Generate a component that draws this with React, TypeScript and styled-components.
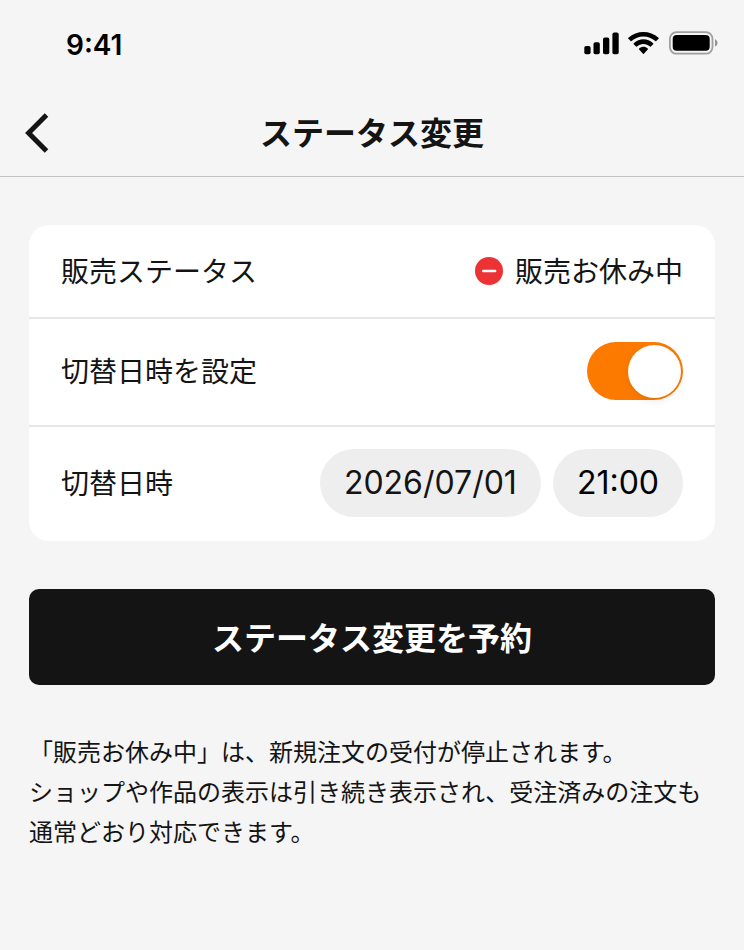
import React, { useState } from "react";
import styled, { createGlobalStyle } from "styled-components";

const GlobalStyle = createGlobalStyle`
  *, *::before, *::after { box-sizing: border-box; }
  body {
    margin: 0;
    background: #f5f5f5;
    color: #141414;
    font-family: "Noto Sans CJK JP", sans-serif;
  }
`;

const StatusBar = styled.div`
  display: flex;
  align-items: flex-start;
  justify-content: space-between;
  height: 88px;
  padding: 28px 26px 0 66px;
  color: #000;
`;

const Clock = styled.time`
  font: 600 28px/34px Inter, sans-serif;
`;

const Indicators = styled.div`
  display: flex;
  align-items: center;
  gap: 9px;
  padding-top: 3px;
`;

const Header = styled.header`
  display: grid;
  grid-template-columns: 48px 1fr 48px;
  align-items: center;
  height: 89px;
  padding: 0 13px;
  border-bottom: 1px solid #c4c4c4;
`;

const BackButton = styled.button`
  display: flex;
  align-items: center;
  justify-content: center;
  width: 48px;
  height: 48px;
  padding: 0;
  border: 0;
  background: none;
  color: inherit;
`;

const Title = styled.h1`
  margin: 0;
  padding-bottom: 2px;
  font-size: 32px;
  line-height: 48px;
  font-weight: 700;
  text-align: center;
`;

const Main = styled.main`
  display: flex;
  flex-direction: column;
  gap: 48px;
  padding: 48px 29px;
`;

const Card = styled.section`
  border-radius: 20px;
  background: #fff;
`;

const Row = styled.div<{ $compact?: boolean }>`
  display: flex;
  align-items: center;
  justify-content: space-between;
  padding: ${(p) => (p.$compact ? "25px 32px" : "22px 32px 24px")};
  font-size: 28px;
  line-height: 40px;

  & + & {
    border-top: 2px solid #e6e6e6;
  }
`;

const RowText = styled.span`
  padding-bottom: 2px;
`;

const Status = styled.span`
  display: flex;
  align-items: center;
  gap: 12px;
`;

const Switch = styled.input`
  appearance: none;
  display: flex;
  align-items: center;
  width: 96px;
  height: 58px;
  margin: 1px 0;
  padding: 2px;
  border-radius: 29px;
  background: #ccc;

  &::before {
    content: "";
    width: 53px;
    height: 53px;
    border-radius: 50%;
    background: #fff;
    box-shadow: 0 3px 8px rgba(0, 0, 0, 0.08);
  }

  &:checked {
    justify-content: flex-end;
    background: #fc7a00;
  }
`;

const Pickers = styled.div`
  display: flex;
  gap: 12px;
`;

const Picker = styled.button<{ $strong?: boolean }>`
  height: 68px;
  padding: 0 24px;
  border: 0;
  border-radius: 34px;
  background: #eee;
  color: ${(p) => (p.$strong ? "#000" : "#141414")};
  font: 400 32px/44px Inter, sans-serif;
`;

const SubmitButton = styled.button`
  height: 96px;
  padding: 0 24px 3px;
  border: 0;
  border-radius: 10px;
  background: #141414;
  color: #fff;
  font: 700 32px/48px "Noto Sans CJK JP", sans-serif;
`;

const Note = styled.p`
  margin: -2px 0 0;
  font-size: 24px;
  line-height: 40px;
`;

const SignalIcon = () => (
  <svg width="35" height="23" viewBox="0 0 35 23" fill="currentColor" aria-hidden="true">
    <rect x="0.3" y="14" width="6.3" height="8.2" rx="1.8" />
    <rect x="9.5" y="10.3" width="6.3" height="11.9" rx="1.8" />
    <rect x="19" y="5.6" width="6.3" height="16.6" rx="1.8" />
    <rect x="28.4" y="0.6" width="6.3" height="21.6" rx="1.8" />
  </svg>
);

const WifiIcon = () => (
  <svg width="31" height="22" viewBox="0 0 17.2 12.33" fill="currentColor" aria-hidden="true">
    <path d="M8.5713 2.46628C11.0584 2.46639 13.4504 3.38847 15.2529 5.04195C15.3887 5.16963 15.6056 5.16802 15.7393 5.03834L17.0368 3.77487C17.1045 3.70911 17.1422 3.62004 17.1417 3.52735C17.1411 3.43467 17.1023 3.34603 17.0338 3.28104C12.3028 -1.09368 4.83907 -1.09368 0.108056 3.28104C0.0395 3.34598 0.0006 3.43459 0 3.52728C-0.0005 3.61997 0.03714 3.70906 0.10488 3.77487L1.40277 5.03834C1.5363 5.16822 1.75334 5.16983 1.88906 5.04195C3.69187 3.38836 6.08413 2.46628 8.5713 2.46628ZM8.56795 6.68656C9.92527 6.68647 11.2341 7.19821 12.2403 8.12234C12.3763 8.25347 12.5907 8.25062 12.7234 8.11595L14.0106 6.79663C14.0784 6.72742 14.116 6.63355 14.115 6.536C14.114 6.43844 14.0746 6.34536 14.0054 6.27757C10.9416 3.38672 6.19688 3.38672 3.13305 6.27757C3.06384 6.34536 3.02435 6.43849 3.02345 6.53607C3.02254 6.63366 3.06028 6.72752 3.1282 6.79663L4.41513 8.11595C4.54778 8.25062 4.76215 8.25347 4.89823 8.12234C5.90368 7.19882 7.21152 6.68713 8.56795 6.68656ZM11.0924 9.48011C11.0943 9.58546 11.0572 9.68703 10.9899 9.76084L8.81327 12.2156C8.74946 12.2877 8.66247 12.3283 8.5717 12.3283C8.48093 12.3283 8.39394 12.2877 8.33013 12.2156L6.15314 9.76084C6.08585 9.68697 6.04886 9.58537 6.05088 9.48002C6.0529 9.37467 6.09376 9.27508 6.16378 9.20453C7.55397 7.90811 9.58943 7.90811 10.9796 9.20453C11.0496 9.27513 11.0904 9.37476 11.0924 9.48011Z" />
  </svg>
);

const BatteryIcon = () => (
  <svg width="50" height="24" viewBox="0 0 50 24" aria-hidden="true">
    <rect x="1.9" y="1.1" width="42.6" height="21.6" rx="6.6" fill="none" stroke="#000" strokeOpacity="0.35" strokeWidth="1.8" />
    <path d="M47 8.2v7.4c1.5-.6 2.5-2.1 2.5-3.7s-1-3.1-2.5-3.7z" fill="#000" fillOpacity="0.4" />
    <rect x="4.7" y="4.1" width="37" height="15.6" rx="4" fill="#000" />
  </svg>
);

const BackIcon = () => (
  <svg width="24" height="42" viewBox="0 0 24 42" fill="none" stroke="currentColor" strokeWidth="5" aria-hidden="true">
    <path d="M21.5 3.9 3.6 21.9l17.9 18" />
  </svg>
);

const PausedIcon = () => (
  <svg width="28" height="28" viewBox="0 0 28 28" aria-hidden="true">
    <circle cx="14" cy="14" r="14" fill="#ec3235" />
    <path d="M8.2 14h12" stroke="#fff" strokeWidth="2.4" strokeLinecap="round" />
  </svg>
);

export default function App() {
  const [scheduled, setScheduled] = useState(true);

  return (
    <>
      <GlobalStyle />
      <StatusBar>
        <Clock>9:41</Clock>
        <Indicators>
          <SignalIcon />
          <WifiIcon />
          <BatteryIcon />
        </Indicators>
      </StatusBar>
      <Header>
        <BackButton type="button" aria-label="戻る">
          <BackIcon />
        </BackButton>
        <Title>ステータス変更</Title>
      </Header>
      <Main>
        <Card>
          <Row $compact>
            <RowText>販売ステータス</RowText>
            <Status>
              <PausedIcon />
              <RowText>販売お休み中</RowText>
            </Status>
          </Row>
          <Row>
            <RowText as="label" htmlFor="schedule">切替日時を設定</RowText>
            <Switch
              id="schedule"
              type="checkbox"
              role="switch"
              checked={scheduled}
              onChange={(e) => setScheduled(e.target.checked)}
            />
          </Row>
          <Row>
            <RowText id="switch-at">切替日時</RowText>
            <Pickers role="group" aria-labelledby="switch-at">
              <Picker type="button">2026/07/01</Picker>
              <Picker type="button" $strong>21:00</Picker>
            </Pickers>
          </Row>
        </Card>
        <SubmitButton type="button">ステータス変更を予約</SubmitButton>
        <Note>
          「販売お休み中」は、新規注文の受付が停止されます。
          <br />
          ショップや作品の表示は引き続き表示され、受注済みの注文も通常どおり対応できます。
        </Note>
      </Main>
    </>
  );
}
